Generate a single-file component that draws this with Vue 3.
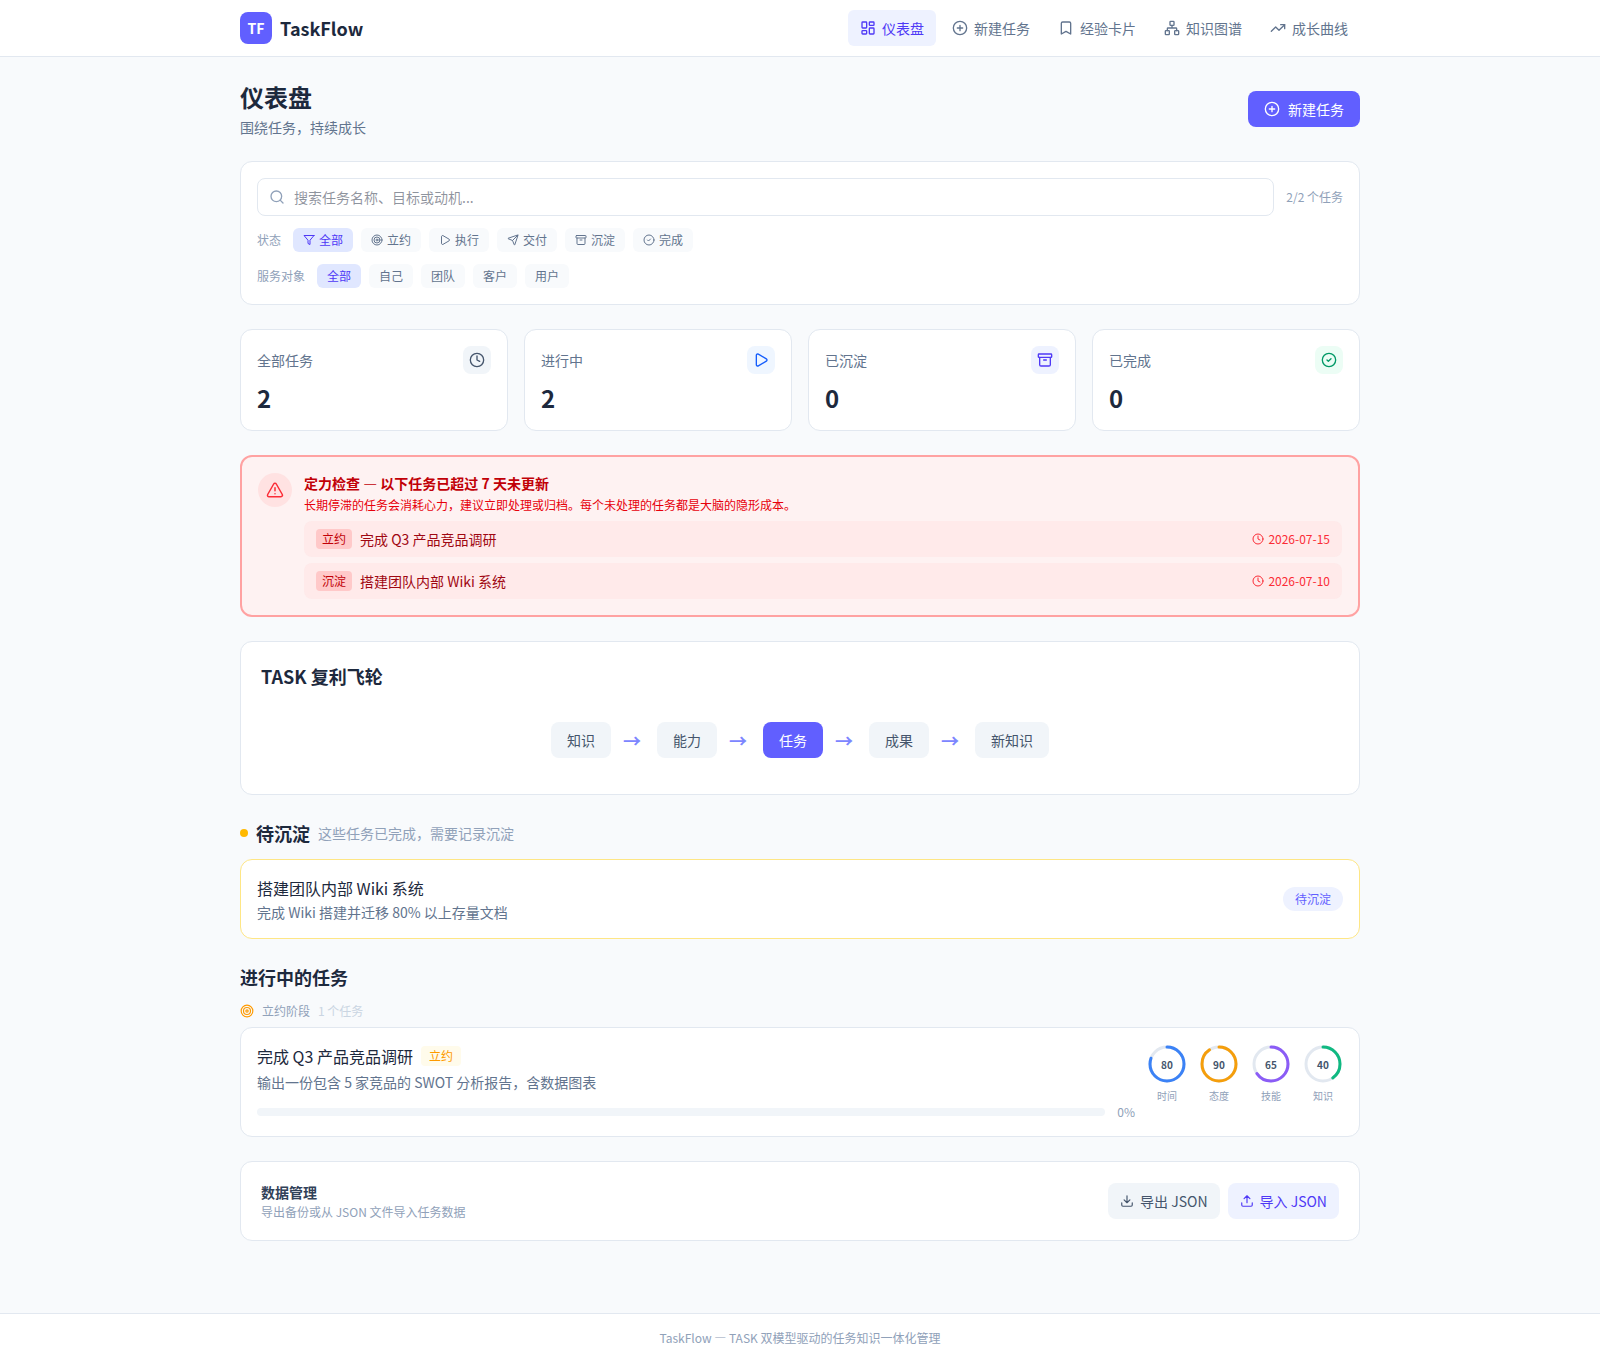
<template>
  <div class="page" lang="zh-CN">
    <header class="topbar">
      <div class="container topbar-inner">
        <div class="brand">
          <span class="brand-logo">TF</span>
          <span class="brand-name">TaskFlow</span>
        </div>
        <nav class="nav">
          <a
            v-for="item in navItems"
            :key="item.label"
            class="nav-item"
            :class="{ active: item.label === currentPage }"
            @click="currentPage = item.label"
          >
            <svg class="icon icon-16" viewBox="0 0 24 24" v-html="icons[item.icon]"></svg>
            {{ item.label }}
          </a>
        </nav>
      </div>
    </header>

    <main class="container main">
      <div class="page-head">
        <div>
          <h1>仪表盘</h1>
          <p class="page-sub">围绕任务，持续成长</p>
        </div>
        <button class="btn-primary">
          <svg class="icon icon-16" viewBox="0 0 24 24" v-html="icons.plus"></svg>
          新建任务
        </button>
      </div>

      <!-- Search and filters -->
      <section class="card filters">
        <div class="search-row">
          <div class="search-box">
            <svg class="icon icon-16 search-icon" viewBox="0 0 24 24" v-html="icons.search"></svg>
            <input v-model="keyword" type="text" class="search-input" placeholder="搜索任务名称、目标或动机..." />
          </div>
          <span class="search-count">2/2 个任务</span>
        </div>
        <div class="filter-row">
          <span class="filter-label">状态</span>
          <button
            v-for="s in statusFilters"
            :key="s.label"
            class="chip"
            :class="{ active: s.label === status }"
            @click="status = s.label"
          >
            <svg class="icon icon-12" viewBox="0 0 24 24" v-html="icons[s.icon]"></svg>
            {{ s.label }}
          </button>
        </div>
        <div class="filter-row">
          <span class="filter-label">服务对象</span>
          <button
            v-for="a in audiences"
            :key="a"
            class="chip"
            :class="{ active: a === audience }"
            @click="audience = a"
          >
            {{ a }}
          </button>
        </div>
      </section>

      <section class="stats">
        <div v-for="stat in stats" :key="stat.label" class="card stat">
          <div class="stat-head">
            <span class="stat-label">{{ stat.label }}</span>
            <span class="stat-icon" :class="stat.tone">
              <svg class="icon icon-16" viewBox="0 0 24 24" v-html="icons[stat.icon]"></svg>
            </span>
          </div>
          <div class="stat-value">{{ stat.value }}</div>
        </div>
      </section>

      <!-- Stale tasks -->
      <section class="alert">
        <span class="alert-icon">
          <svg class="icon icon-18" viewBox="0 0 24 24" v-html="icons.alert"></svg>
        </span>
        <div class="alert-body">
          <h3>定力检查 — 以下任务已超过 7 天未更新</h3>
          <p>长期停滞的任务会消耗心力，建议立即处理或归档。每个未处理的任务都是大脑的隐形成本。</p>
          <div class="stale-list">
            <div v-for="t in staleTasks" :key="t.name" class="stale-item">
              <span class="stale-tag">{{ t.stage }}</span>
              <span class="stale-name">{{ t.name }}</span>
              <span class="stale-date">
                <svg class="icon icon-12" viewBox="0 0 24 24" v-html="icons.clock"></svg>
                {{ t.date }}
              </span>
            </div>
          </div>
        </div>
      </section>

      <section class="card flywheel">
        <h2>TASK 复利飞轮</h2>
        <div class="wheel">
          <template v-for="(step, i) in wheelSteps" :key="step">
            <span class="wheel-step" :class="{ active: step === '任务' }">{{ step }}</span>
            <span v-if="i < wheelSteps.length - 1" class="wheel-arrow">→</span>
          </template>
        </div>
      </section>

      <section class="group">
        <div class="group-head">
          <span class="dot"></span>
          <h2>待沉淀</h2>
          <span class="group-hint">这些任务已完成，需要记录沉淀</span>
        </div>
        <div class="card pending">
          <div>
            <h3 class="task-title">搭建团队内部 Wiki 系统</h3>
            <p class="task-desc">完成 Wiki 搭建并迁移 80% 以上存量文档</p>
          </div>
          <span class="badge">待沉淀</span>
        </div>
      </section>

      <section class="group">
        <h2>进行中的任务</h2>
        <div class="stage-head">
          <svg class="icon icon-14 stage-icon" viewBox="0 0 24 24" v-html="icons.target"></svg>
          <span>立约阶段</span>
          <span class="stage-count">1 个任务</span>
        </div>
        <div class="card task">
          <div class="task-main">
            <div class="task-title-row">
              <h3 class="task-title">完成 Q3 产品竞品调研</h3>
              <span class="stage-tag">立约</span>
            </div>
            <p class="task-desc">输出一份包含 5 家竞品的 SWOT 分析报告，含数据图表</p>
            <div class="progress-row">
              <div class="progress"><div class="progress-fill" :style="{ width: progress + '%' }"></div></div>
              <span class="progress-text">{{ progress }}%</span>
            </div>
          </div>
          <div class="rings">
            <div v-for="r in rings" :key="r.label" class="ring">
              <svg width="40" height="40" viewBox="0 0 40 40">
                <circle cx="20" cy="20" :r="RADIUS" fill="none" stroke="#e2e8f0" stroke-width="3" />
                <circle
                  cx="20"
                  cy="20"
                  :r="RADIUS"
                  fill="none"
                  :stroke="r.color"
                  stroke-width="3"
                  stroke-linecap="round"
                  :stroke-dasharray="dash(r.value)"
                  transform="rotate(-90 20 20)"
                />
                <text x="20" y="20" class="ring-value">{{ r.value }}</text>
              </svg>
              <span class="ring-label">{{ r.label }}</span>
            </div>
          </div>
        </div>
      </section>

      <section class="card data">
        <div>
          <h3 class="data-title">数据管理</h3>
          <p class="data-sub">导出备份或从 JSON 文件导入任务数据</p>
        </div>
        <div class="data-actions">
          <button class="btn-soft">
            <svg class="icon icon-14" viewBox="0 0 24 24" v-html="icons.download"></svg>
            导出 JSON
          </button>
          <button class="btn-soft indigo">
            <svg class="icon icon-14" viewBox="0 0 24 24" v-html="icons.upload"></svg>
            导入 JSON
          </button>
        </div>
      </section>
    </main>

    <footer class="footer">TaskFlow — TASK 双模型驱动的任务知识一体化管理</footer>
  </div>
</template>

<script setup>
import { ref } from "vue";

const icons = {
  dashboard:
    '<rect width="7" height="9" x="3" y="3" rx="1"/><rect width="7" height="5" x="14" y="3" rx="1"/><rect width="7" height="9" x="14" y="12" rx="1"/><rect width="7" height="5" x="3" y="16" rx="1"/>',
  plus: '<circle cx="12" cy="12" r="10"/><path d="M8 12h8M12 8v8"/>',
  bookmark: '<path d="m19 21-7-4-7 4V5a2 2 0 0 1 2-2h10a2 2 0 0 1 2 2v16z"/>',
  network:
    '<rect x="16" y="16" width="6" height="6" rx="1"/><rect x="2" y="16" width="6" height="6" rx="1"/><rect x="9" y="2" width="6" height="6" rx="1"/><path d="M5 16v-3a1 1 0 0 1 1-1h12a1 1 0 0 1 1 1v3M12 12V8"/>',
  trending: '<path d="M16 7h6v6"/><path d="m22 7-8.5 8.5-5-5L2 17"/>',
  search: '<circle cx="11" cy="11" r="8"/><path d="m21 21-4.3-4.3"/>',
  filter: '<path d="M22 3H2l8 9.46V19l4 2v-8.54L22 3z"/>',
  target: '<circle cx="12" cy="12" r="10"/><circle cx="12" cy="12" r="6"/><circle cx="12" cy="12" r="2"/>',
  play: '<path d="M5 5a2 2 0 0 1 3.008-1.728l11.997 6.998a2 2 0 0 1 .003 3.458l-12 7A2 2 0 0 1 5 19z"/>',
  send: '<path d="M14.536 21.686a.5.5 0 0 0 .937-.024l6.5-19a.496.496 0 0 0-.635-.635l-19 6.5a.5.5 0 0 0-.024.937l7.93 3.18a2 2 0 0 1 1.112 1.11z"/><path d="m21.854 2.147-10.94 10.939"/>',
  archive: '<rect width="20" height="5" x="2" y="3" rx="1"/><path d="M4 8v11a2 2 0 0 0 2 2h12a2 2 0 0 0 2-2V8M10 12h4"/>',
  check: '<circle cx="12" cy="12" r="10"/><path d="m9 12 2 2 4-4"/>',
  clock: '<circle cx="12" cy="12" r="10"/><path d="M12 6v6l4 2"/>',
  alert: '<path d="m21.73 18-8-14a2 2 0 0 0-3.48 0l-8 14A2 2 0 0 0 4 21h16a2 2 0 0 0 1.73-3M12 9v4M12 17h.01"/>',
  download: '<path d="M12 15V3M21 15v4a2 2 0 0 1-2 2H5a2 2 0 0 1-2-2v-4M7 10l5 5 5-5"/>',
  upload: '<path d="M12 3v12M17 8l-5-5-5 5M21 15v4a2 2 0 0 1-2 2H5a2 2 0 0 1-2-2v-4"/>',
};

const navItems = [
  { label: "仪表盘", icon: "dashboard" },
  { label: "新建任务", icon: "plus" },
  { label: "经验卡片", icon: "bookmark" },
  { label: "知识图谱", icon: "network" },
  { label: "成长曲线", icon: "trending" },
];
const currentPage = ref("仪表盘");

const statusFilters = [
  { label: "全部", icon: "filter" },
  { label: "立约", icon: "target" },
  { label: "执行", icon: "play" },
  { label: "交付", icon: "send" },
  { label: "沉淀", icon: "archive" },
  { label: "完成", icon: "check" },
];
const audiences = ["全部", "自己", "团队", "客户", "用户"];

const keyword = ref("");
const status = ref("全部");
const audience = ref("全部");

const stats = [
  { label: "全部任务", value: 2, icon: "clock", tone: "slate" },
  { label: "进行中", value: 2, icon: "play", tone: "blue" },
  { label: "已沉淀", value: 0, icon: "archive", tone: "indigo" },
  { label: "已完成", value: 0, icon: "check", tone: "green" },
];

const staleTasks = [
  { stage: "立约", name: "完成 Q3 产品竞品调研", date: "2026-07-15" },
  { stage: "沉淀", name: "搭建团队内部 Wiki 系统", date: "2026-07-10" },
];

const wheelSteps = ["知识", "能力", "任务", "成果", "新知识"];

const progress = ref(0);
const rings = [
  { label: "时间", value: 80, color: "#3b82f6" },
  { label: "态度", value: 90, color: "#f59e0b" },
  { label: "技能", value: 65, color: "#8b5cf6" },
  { label: "知识", value: 40, color: "#10b981" },
];

const RADIUS = 17;

function dash(value) {
  const length = 2 * Math.PI * RADIUS;
  return `${(length * value) / 100} ${length}`;
}
</script>

<style>
body {
  margin: 0;
  background: #f8fafc;
}
</style>

<style scoped>
.page {
  min-height: 100vh;
  display: flex;
  flex-direction: column;
  background: #f8fafc;
  color: #1d293d;
  font-family: "Noto Sans CJK SC", sans-serif;
  font-size: 14px;
  line-height: 20px;
  -webkit-font-smoothing: antialiased;
}

.page *,
.page {
  box-sizing: border-box;
}

h1,
h2,
h3,
p {
  margin: 0;
}

h2 {
  font-size: 18px;
  line-height: 28px;
  font-weight: 700;
}

button {
  border: none;
  font: inherit;
  cursor: pointer;
}

.container {
  width: 1120px;
  margin: 0 auto;
}

.icon {
  display: block;
  flex-shrink: 0;
  fill: none;
  stroke: currentColor;
  stroke-width: 2;
  stroke-linecap: round;
  stroke-linejoin: round;
}
.icon-12 { width: 12px; height: 12px; }
.icon-14 { width: 14px; height: 14px; }
.icon-16 { width: 16px; height: 16px; }
.icon-18 { width: 18px; height: 18px; }

.card {
  background: #fff;
  border: 1px solid #e2e8f0;
  border-radius: 12px;
}

/* Top bar */
.topbar {
  background: #fff;
  border-bottom: 1px solid #e2e8f0;
}

.topbar-inner {
  height: 56px;
  display: flex;
  align-items: center;
  justify-content: space-between;
}

.brand {
  display: flex;
  align-items: center;
  gap: 8px;
}

.brand-logo {
  width: 32px;
  height: 32px;
  display: flex;
  align-items: center;
  justify-content: center;
  border-radius: 8px;
  background: #615fff;
  color: #fff;
  font-weight: 700;
}

.brand-name {
  font-size: 18px;
  line-height: 28px;
  font-weight: 700;
}

.nav {
  display: flex;
  gap: 4px;
}

.nav-item {
  display: flex;
  align-items: center;
  gap: 6px;
  padding: 8px 12px;
  border-radius: 6px;
  color: #62748e;
  cursor: pointer;
}

.nav-item.active {
  background: #eef2ff;
  color: #4f39f6;
}

/* Page */
.main {
  padding: 24px 0;
  display: flex;
  flex-direction: column;
  gap: 24px;
}

.page-head {
  display: flex;
  align-items: center;
  justify-content: space-between;
}

h1 {
  font-size: 24px;
  line-height: 32px;
  font-weight: 700;
}

.page-sub {
  margin-top: 4px;
  color: #62748e;
}

.btn-primary {
  display: flex;
  align-items: center;
  gap: 8px;
  padding: 8px 16px;
  border-radius: 8px;
  background: #615fff;
  color: #fff;
}

/* Filters */
.filters {
  padding: 16px;
  display: flex;
  flex-direction: column;
  gap: 12px;
}

.search-row {
  display: flex;
  align-items: center;
  gap: 12px;
}

.search-box {
  position: relative;
  flex: 1;
  display: flex;
}

.search-icon {
  position: absolute;
  left: 12px;
  top: 11px;
  color: #90a1b9;
}

.search-input {
  width: 100%;
  height: 38px;
  padding: 8px 12px 8px 36px;
  border: 1px solid #e2e8f0;
  border-radius: 8px;
  background: #fff;
  color: #1d293d;
  font: inherit;
  outline: none;
}

.search-input:focus {
  border-color: #615fff;
}

.search-input::placeholder {
  color: rgba(29, 41, 61, 0.5);
}

.search-count {
  font-size: 12px;
  color: #90a1b9;
}

.filter-row {
  display: flex;
  align-items: center;
  gap: 8px;
  font-size: 12px;
  line-height: 16px;
}

.filter-label {
  margin-right: 4px;
  color: #90a1b9;
}

.chip {
  display: flex;
  align-items: center;
  gap: 4px;
  padding: 4px 10px;
  border-radius: 6px;
  background: #f8fafc;
  color: #62748e;
}

.chip.active {
  background: #e0e7ff;
  color: #4f39f6;
}

/* Stats */
.stats {
  display: grid;
  grid-template-columns: repeat(4, 1fr);
  gap: 16px;
}

.stat {
  padding: 16px;
}

.stat-head {
  display: flex;
  align-items: center;
  justify-content: space-between;
  margin-bottom: 8px;
}

.stat-label {
  color: #62748e;
}

.stat-icon {
  padding: 6px;
  border-radius: 8px;
}
.stat-icon.slate { background: #f1f5f9; color: #45556c; }
.stat-icon.blue { background: #eff6ff; color: #155dfc; }
.stat-icon.indigo { background: #eef2ff; color: #4f39f6; }
.stat-icon.green { background: #ecfdf5; color: #009966; }

.stat-value {
  font-size: 24px;
  line-height: 32px;
  font-weight: 700;
}

/* Alert */
.alert {
  display: flex;
  align-items: flex-start;
  gap: 12px;
  padding: 16px;
  border: 2px solid #ffa2a2;
  border-radius: 12px;
  background: #fef2f2;
}

.alert-icon {
  padding: 8px;
  border-radius: 50%;
  background: #ffe2e2;
  color: #fb2c36;
}

.alert-body {
  flex: 1;
}

.alert-body h3 {
  font-size: 14px;
  font-weight: 700;
  color: #c10007;
}

.alert-body p {
  margin-top: 4px;
  font-size: 12px;
  line-height: 16px;
  color: #e7000b;
}

.stale-list {
  margin-top: 8px;
  display: flex;
  flex-direction: column;
  gap: 6px;
}

.stale-item {
  display: flex;
  align-items: center;
  gap: 8px;
  padding: 8px 12px;
  border-radius: 8px;
  background: rgba(255, 226, 226, 0.5);
}

.stale-tag {
  padding: 2px 6px;
  border-radius: 4px;
  background: #ffc9c9;
  color: #c10007;
  font-size: 12px;
  line-height: 16px;
}

.stale-name {
  flex: 1;
  color: #9f0712;
}

.stale-date {
  display: flex;
  align-items: center;
  gap: 4px;
  font-size: 12px;
  line-height: 16px;
  color: #fb2c36;
}

/* Flywheel */
.flywheel {
  padding: 20px;
}

.wheel {
  margin-top: 16px;
  padding: 16px 0;
  display: flex;
  align-items: center;
  justify-content: center;
  gap: 12px;
}

.wheel-step {
  padding: 8px 16px;
  border-radius: 8px;
  background: #f1f5f9;
  color: #45556c;
}

.wheel-step.active {
  background: #615fff;
  color: #fff;
}

.wheel-arrow {
  width: 22px;
  font-size: 18px;
  line-height: 28px;
  font-weight: 700;
  color: #7c86ff;
}

/* Task groups */
.group-head {
  display: flex;
  align-items: center;
  gap: 8px;
  margin-bottom: 12px;
}

.dot {
  width: 8px;
  height: 8px;
  border-radius: 50%;
  background: #ffb900;
}

.group-hint {
  color: #90a1b9;
}

.pending {
  display: flex;
  align-items: center;
  justify-content: space-between;
  padding: 16px;
  border-color: #fee685;
}

.task-title {
  font-size: 16px;
  line-height: 24px;
  font-weight: 400;
}

.task-desc {
  color: #62748e;
}

.pending .task-desc {
  margin-top: 2px;
}

.badge {
  padding: 4px 12px;
  border-radius: 12px;
  background: #eef2ff;
  color: #615fff;
  font-size: 12px;
  line-height: 16px;
}

.stage-head {
  display: flex;
  align-items: center;
  gap: 8px;
  margin: 12px 0 8px;
  font-size: 12px;
  line-height: 16px;
  color: #90a1b9;
}

.stage-icon {
  color: #fe9a00;
}

.stage-count {
  color: #cad5e2;
}

.task {
  display: flex;
  align-items: flex-start;
  gap: 12px;
  padding: 16px;
}

.task-main {
  flex: 1;
}

.task-title-row {
  display: flex;
  align-items: center;
  gap: 8px;
  margin-bottom: 4px;
}

.stage-tag {
  padding: 2px 8px;
  border-radius: 4px;
  background: #fffbeb;
  color: #fe9a00;
  font-size: 12px;
  line-height: 16px;
}

.progress-row {
  margin-top: 12px;
  display: flex;
  align-items: center;
  gap: 12px;
}

.progress {
  flex: 1;
  height: 8px;
  border-radius: 4px;
  background: #f1f5f9;
  overflow: hidden;
}

.progress-fill {
  height: 100%;
  border-radius: 4px;
  background: #615fff;
}

.progress-text {
  font-size: 12px;
  line-height: 16px;
  color: #90a1b9;
}

.rings {
  display: flex;
  gap: 12px;
}

.ring {
  display: flex;
  flex-direction: column;
  align-items: center;
  gap: 4px;
}

.ring-value {
  fill: #45556c;
  font-size: 10px;
  font-weight: 700;
  text-anchor: middle;
  dominant-baseline: central;
}

.ring-label {
  font-size: 10px;
  line-height: 15px;
  color: #90a1b9;
}

/* Data management */
.data {
  display: flex;
  align-items: center;
  justify-content: space-between;
  padding: 20px;
}

.data-title {
  font-size: 14px;
  font-weight: 700;
  color: #314158;
}

.data-sub {
  margin-top: 2px;
  font-size: 12px;
  line-height: 16px;
  color: #90a1b9;
}

.data-actions {
  display: flex;
  gap: 8px;
}

.btn-soft {
  display: flex;
  align-items: center;
  gap: 6px;
  padding: 8px 12px;
  border-radius: 8px;
  background: #f1f5f9;
  color: #45556c;
}

.btn-soft.indigo {
  background: #eef2ff;
  color: #4f39f6;
}

.footer {
  margin-top: auto;
  padding: 16px 0;
  border-top: 1px solid #e2e8f0;
  background: #fff;
  text-align: center;
  font-size: 12px;
  line-height: 16px;
  color: #90a1b9;
}
</style>
